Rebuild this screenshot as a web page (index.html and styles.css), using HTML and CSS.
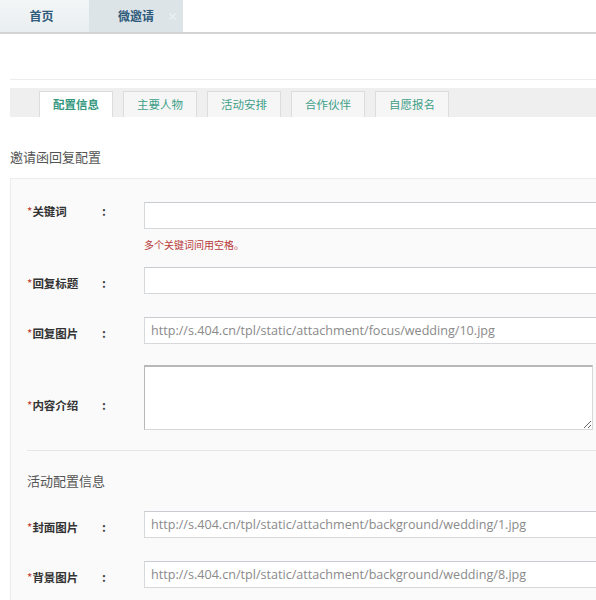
FILE: index.html
```html
<!DOCTYPE html>
<html lang="zh-CN">
<head>
  <meta charset="UTF-8">
  <title>微邀请</title>
  <link rel="stylesheet" href="styles.css">
</head>
<body>
  <div class="page">
    <div class="topbar">
      <div class="top-tab">首页</div>
      <div class="top-tab current">微邀请<span class="close">×</span></div>
    </div>

    <div class="rule"></div>

    <div class="subtabs">
      <div class="subtab active">配置信息</div>
      <div class="subtab">主要人物</div>
      <div class="subtab">活动安排</div>
      <div class="subtab">合作伙伴</div>
      <div class="subtab">自愿报名</div>
    </div>

    <h3 class="section-title">邀请函回复配置</h3>

    <div class="form-box">
      <div class="row first">
        <label class="label"><i>*</i>关键词</label>
        <span class="colon">:</span>
        <div class="field">
          <input type="text" class="text">
          <p class="hint">多个关键词间用空格。</p>
        </div>
      </div>
      <div class="row">
        <label class="label"><i>*</i>回复标题</label>
        <span class="colon">:</span>
        <div class="field"><input type="text" class="text"></div>
      </div>
      <div class="row">
        <label class="label"><i>*</i>回复图片</label>
        <span class="colon">:</span>
        <div class="field"><input type="text" class="text" value="http://s.404.cn/tpl/static/attachment/focus/wedding/10.jpg"></div>
      </div>
      <div class="row tall">
        <label class="label"><i>*</i>内容介绍</label>
        <span class="colon">:</span>
        <div class="field"><textarea class="area"></textarea></div>
      </div>

      <div class="divider"></div>
      <h4 class="sub-title">活动配置信息</h4>

      <div class="row">
        <label class="label"><i>*</i>封面图片</label>
        <span class="colon">:</span>
        <div class="field"><input type="text" class="text" value="http://s.404.cn/tpl/static/attachment/background/wedding/1.jpg"></div>
      </div>
      <div class="row">
        <label class="label"><i>*</i>背景图片</label>
        <span class="colon">:</span>
        <div class="field"><input type="text" class="text" value="http://s.404.cn/tpl/static/attachment/background/wedding/8.jpg"></div>
      </div>
    </div>
  </div>
</body>
</html>
```

FILE: styles.css
```css
html, body {
  margin: 0;
  padding: 0;
  background: #fff;
}
body {
  font-family: "Noto Sans CJK SC", "Open Sans", sans-serif;
  color: #333;
}
.page {
  width: 596px;
  height: 600px;
  overflow: hidden;
}
.topbar {
  display: flex;
  height: 32px;
  border-bottom: 2px solid #d3d3d3;
}
.top-tab {
  position: relative;
  width: 89px;
  line-height: 32px;
  text-align: center;
  font-size: 12px;
  font-weight: bold;
  color: #2d5a7b;
  background: linear-gradient(#f3f6f7, #e9eef0);
  text-indent: -6px;
}
.top-tab.current {
  width: 94px;
  background: #dde4e7;
  text-indent: 0;
}
.top-tab .close {
  position: absolute;
  right: 5px;
  top: 0;
  color: #f4f6f7;
  font-weight: normal;
  font-size: 11px;
  line-height: 32px;
}
.rule {
  margin: 45px 0 0 10px;
  border-top: 1px solid #ececec;
}
.subtabs {
  display: flex;
  align-items: flex-end;
  gap: 10px;
  margin: 8px 0 0 10px;
  height: 29px;
  padding-left: 29px;
  background: #efefef;
}
.subtab {
  width: 72px;
  height: 25px;
  line-height: 25px;
  text-align: center;
  font-size: 11.5px;
  color: #3e9f88;
  background: #f6f6f6;
  border: 1px solid #dcdcdc;
  border-bottom: none;
}
.subtab.active {
  background: #fff;
  font-weight: bold;
  color: #35987f;
}
.section-title {
  margin: 31px 0 0 10px;
  font-size: 13px;
  font-weight: normal;
  line-height: 18px;
  color: #555;
}
.form-box {
  margin: 12px 0 0 10px;
  padding: 23px 0 0 16px;
  background: #fafafa;
  border-top: 1px solid #ececec;
  border-left: 1px solid #ececec;
  height: 600px;
}
.row {
  display: flex;
  align-items: flex-start;
  margin-bottom: 23px;
}
.row.first {
  margin-bottom: 16px;
}
.label {
  flex-shrink: 0;
  width: 75px;
  line-height: 22px;
  padding-top: 5px;
  font-size: 11.5px;
  font-weight: bold;
  color: #333;
}
.label i {
  font-style: normal;
  color: #c0392b;
  font-weight: normal;
}
.colon {
  flex-shrink: 0;
  width: 42px;
  line-height: 22px;
  padding-top: 5px;
  font-size: 12px;
  font-weight: bold;
  color: #444;
}
.row.first .label,
.row.first .colon {
  padding-top: 0;
  margin-top: -2px;
}
.row.tall {
  margin-bottom: 20px;
}
.row.tall .label,
.row.tall .colon {
  padding-top: 27px;
}
.field {
  flex: 1;
  min-width: 0;
}
.text {
  box-sizing: border-box;
  display: block;
  width: 480px;
  height: 27px;
  margin: 0;
  padding: 0 6px;
  border: 1px solid #d5d9dc;
  border-top-color: #c9cdd1;
  background: #fff;
  font-family: "Open Sans", sans-serif;
  font-size: 12.6px;
  color: #8a8a8a;
  outline: none;
}
.hint {
  margin: 10px 0 0;
  font-size: 10px;
  line-height: 12px;
  color: #b83a3a;
}
.area {
  box-sizing: border-box;
  display: block;
  width: 449px;
  height: 65px;
  margin: -2px 0 0;
  padding: 4px 6px;
  border: 1px solid #d5d9dc;
  border-top: 2px solid #b8b8b8;
  border-left-color: #b8b8b8;
  background: #fff;
  outline: none;
}
.divider {
  border-top: 1px solid #e6e6e6;
}
.sub-title {
  margin: 21px 0 21px;
  font-size: 13px;
  font-weight: normal;
  line-height: 18px;
  color: #555;
}
```
